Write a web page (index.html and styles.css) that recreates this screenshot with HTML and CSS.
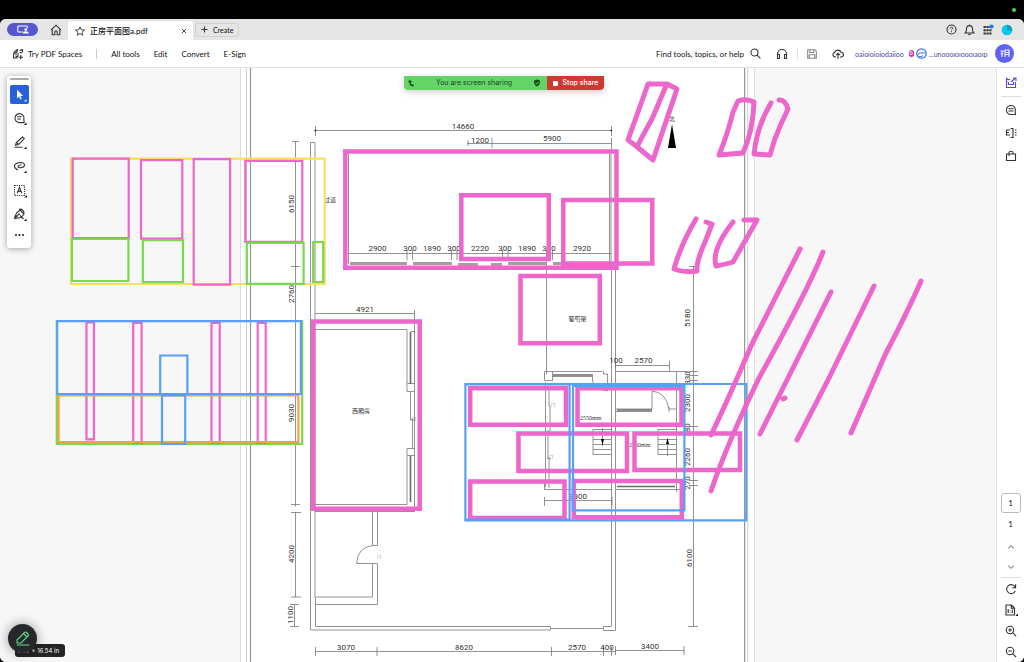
FILE: index.html
```html
<!DOCTYPE html>
<html lang="en">
<head>
<meta charset="utf-8">
<title>正房平面图a.pdf</title>
<link rel="stylesheet" href="styles.css">
</head>
<body>
<div class="menubar"><span class="camera-dot"></span></div>
<div class="window">
  <header class="tabs">
    <button class="share-pill" aria-label="Screen share"><svg width="12" height="9" viewBox="0 0 12 9"><path d="M6 7H.8V1h9.400V3.500" class="w"/><circle cx="8.800" cy="4.600" r="1.400" fill="#fff"/><path d="M6 8.600q0-2.400 2.800-2.400t2.800 2.400z" fill="#fff"/></svg></button>
    <button class="home" aria-label="Home"><svg width="12" height="12" viewBox="0 0 12 12"><path d="M1 6.200 6 1.200l5 5M2.200 5.500v5.300h2.600V8q0-1.200 1.200-1.200T7.200 8v2.800h2.600V5.500" class="i"/></svg></button>
    <div class="tab">
      <svg width="10" height="10" viewBox="0 0 10 10"><path d="m5 .8 1.200 2.900 3.200.3L7 6.100l.7 3.100L5 7.500 2.300 9.200 3 6.100.6 4l3.200-.3z" class="i thin"/></svg>
      <span class="tab-name">正房平面图a.pdf</span>
      <button class="close" aria-label="Close tab"><svg width="6" height="6" viewBox="0 0 6 6"><path d="m.8.8 4.400 4.400M5.200.8.8 5.200" class="i thin"/></svg></button>
    </div>
    <button class="create"><svg width="7" height="7" viewBox="0 0 7 7"><path d="M3.500.5v6M.5 3.500h6" class="i"/></svg>Create</button>
    <div class="tab-actions">
      <button aria-label="Help"><svg width="11" height="11" viewBox="0 0 11 11"><circle cx="5.500" cy="5.500" r="4.500" class="i"/><path d="M4.200 4.500q0-1.300 1.300-1.300t1.300 1.200q0 .6-.7 1.100t-.6.9M5.500 7.200v1" class="i thin"/></svg></button>
      <button aria-label="Notifications"><svg width="11" height="12" viewBox="0 0 11 12"><path d="M1.300 9h8.400Q8.500 8 8.500 4.900 8.500 1.600 5.500 1.600t-3 3.300Q2.500 8 1.300 9zM4.300 10q1.200 1.400 2.400 0M5.500.6v1" class="i"/></svg></button>
      <button aria-label="Apps"><svg width="12" height="12" viewBox="0 0 12 12"><path d="M1.500 3h8M1.500 6.200h8M1.500 9.400h8" stroke="#333" stroke-width="2" stroke-dasharray="2.300 .6"/><circle cx="9.500" cy="2.500" r="2.100" fill="#147af3"/></svg></button>
      <button aria-label="Profile"><svg width="12" height="12" viewBox="0 0 12 12"><circle cx="6" cy="6" r="5.300" fill="#08c8ee"/><path d="M6 .8v5.400l5.200.6A5.300 5.300 0 0 0 6 .8" fill="#0a9fb8"/></svg></button>
    </div>
  </header>
  <nav class="toolbar">
    <button class="spaces"><svg width="12" height="12" viewBox="0 0 12 12"><path d="M6 1.200Q1.500 3 1.500 7.500V10h4M3.500 2.700l2.500.2M2.300 5.200l3.200-1.300M4 5.500v2M6 5v3.500M3.500 8.600H6M7.500 2.500l3.200-1M10.500 1v3.500M8.800 7v4.400M6.600 9.200H11M7.500 4.500l2.500.4" class="i"/></svg>Try PDF Spaces</button>
    <span class="vline"></span>
    <a href="#tools">All tools</a><a href="#edit">Edit</a><a href="#convert">Convert</a><a href="#sign">E-Sign</a>
    <div class="toolbar-right">
      <button class="find">Find tools, topics, or help<svg width="11" height="11" viewBox="0 0 11 11"><circle cx="4.500" cy="4.500" r="3.500" class="i"/><path d="m7.100 7.100 3.300 3.300" class="i"/></svg></button>
      <button aria-label="Support"><svg width="12" height="12" viewBox="0 0 12 12"><path d="M1.500 9V6a4.500 4.500 0 0 1 9 0v3M1.500 6.500h2v4h-2zM8.500 6.500h2v4h-2z" class="i"/></svg></button>
      <span class="vline short"></span>
      <button aria-label="Save"><svg width="10" height="10" viewBox="0 0 10 10"><path d="M.7.700h7.200l1.400 1.400v7.200H.7zM2.800.8v2.700h4V.8M2.300 9.200V5.800h5.400v3.400" class="i faded"/></svg></button>
      <button class="upload" aria-label="Upload"><svg width="12" height="12" viewBox="0 0 12 12"><path d="M4 9H3a2.300 2.300 0 0 1-.4-4.500A3.400 3.400 0 0 1 9 4.200 2.400 2.400 0 0 1 9 9H8M6 11V5.300M4 7.200l2-2 2 2" class="i"/></svg></button>
      <span class="people"><span>oaioioioiodaiioo</span><b>0</b><svg width="11" height="11" viewBox="0 0 11 11"><circle cx="5.500" cy="5.500" r="4.700" fill="#fff" stroke="#3b6df0" stroke-width="1.200"/><path d="M1.500 7.500q1-3 3.500-2.500h4.500M3 8.500q2 1 4-1" fill="none" stroke="#3b6df0"/></svg><span>...unoooıoıoooıaoıp</span></span>
      <button class="avatar" aria-label="Account"><svg width="10" height="9" viewBox="0 0 10 9"><path d="M.5 2h4M2 2v6M5 1h4.500M5.500 3.500h4M5 1v7M9 1v7M5 5.500h4M.8 5h2.500" class="w"/></svg></button>
    </div>
  </nav>
  <main class="workspace">
    <div class="canvas">
      <svg class="plan" viewBox="0 68 996 594" preserveAspectRatio="xMinYMin slice" aria-label="Floor plan">
        <rect x="240.500" y="60" width="514" height="610" fill="#fff" stroke="#dedede"/>
        <path d="M246.500 68v594M747.700 68v594" stroke="#cfcfcf"/>
        <path d="M250.500 68v594M744.600 68v594" stroke="#969696" stroke-width="1.200"/>
        <g class="cad">
          <path d="M315.500 130.500h296M315.500 126v10M611.500 126v10M467 143.500h144M468 140v6M492 138v10M611.500 138v11"/>
          <path d="M295.500 141.500v365M292 141.500h7M291 266.500h9M291 504.500h9M295.500 512v85M291 512.500h10M291 597h10M294.500 604v22.500M290 604.500h9M290 626.500h9"/>
          <path d="M693.500 266v224M689 266.500h9M689 371.500h9M689 375.500h9M689 380.500h9M689 426.500h9M689 480.500h9M689 485.500h9M693.500 489v137.500M688 626.500h10"/>
          <path d="M310.500 630V142.500h4.500V598M310.500 630h240v-3.500H315.500V598M551 628.500h52M603.500 626.500h8v-107M603.500 626.500v4h12V268M611.500 268V519M611 154v108M609.500 154v108"/>
          <path d="M348.500 154v110M348.500 253.500h263M407 250v10M412.500 250v10M451.500 250v10M457 250v10M502.500 250v10M508 250v10M546.500 250v124M552.500 250v10"/>
          <path d="M315 313.500h99.500M414.500 310v201M315 329.500h92v62h7.500M315 504.500h92v-56h7.500M411 331.500h3.500M407.500 383.500h7M407.500 455.500h7M315 511.500h100"/>
          <path d="M410.500 392v28h2v28M411 419l4 1M372.500 512v33M377.500 512v33.500h-5q-15 2-16 18h21M372.500 564v33H315.500M377.500 564v40.500h-62"/>
          <path d="M544.500 371.500h8v9h-8zM552 376.500h40M552 371.500h50M592.500 374v7q1 8 15 10v-17h-4v-3M545.500 382v105M549 390v16h1v30M548 430v28h1v30M547 458l4 1M544.500 480v9.500h67"/>
          <path d="M615.500 371.500h72M615 365.500h55M615.500 362v7M669.500 361v10M676.500 372v120M616 409h36v-18q14 1 17 18h7M616 411.500h36M669 407v5M616 489.500h66"/>
          <path d="M544.500 500.500h67M544.500 497v9M612 497v9M593 429.500h18.500M593 434.500h18M593 439.500h18M593 444.500h18M593 449.500h18M593 454.500h18M593 429v26M602.500 428v18M658 429.500h18.500M658 434.500h18M658 439.500h18M658 444.500h18M658 449.500h18M658 454.500h18M658 429v26M667.500 439v17"/>
          <path d="M315.500 651.500h300M315.500 647v9M377 647v9M551.500 647v9M603.500 647v9M611.500 647v9M615.500 650.500h69M615.500 646v9M684 646v9"/>
        </g>
        <path d="M350 263.500h57M413 263.500h39M458 264.500h20M491 264.500h11M508 263.500h39M553 263.500h8" stroke="#a0a0a0" stroke-width="3"/>
        <path d="M553 375h39M410.500 332v52M410.500 456v46M617 486.500h58M617 410h35" stroke="#686868" stroke-width="1.600"/>
        <path d="m601 439 1.500 6 1.500-6zM666 444l1.500-6 1.500 6zM668 148l4-24 4 24zM314 130.500l2-1v2zM610 130.500l2-1v2z" fill="#000"/>
        <g class="dim">
          <text x="463" y="129">14660</text><text x="480" y="143">1200</text><text x="552" y="141">5900</text>
          <text x="377.500" y="251">2900</text><text x="410" y="251">300</text><text x="432" y="251">1890</text><text x="454" y="251">300</text><text x="480" y="251">2220</text><text x="505" y="251">300</text><text x="527" y="251">1890</text><text x="549" y="251">300</text><text x="582" y="251">2920</text>
          <text x="365" y="312">4921</text><text x="616" y="363">100</text><text x="643.500" y="363">2570</text><text x="578" y="499">3300</text>
          <text x="346" y="650">3070</text><text x="464" y="650">8620</text><text x="577" y="650">2570</text><text x="607" y="650">400</text><text x="650" y="649">3400</text>
          <text transform="translate(294 204) rotate(-90)">6150</text><text transform="translate(294 294) rotate(-90)">2760</text><text transform="translate(294 413) rotate(-90)">9030</text><text transform="translate(294 554) rotate(-90)">4200</text><text transform="translate(293 615) rotate(-90)">1100</text>
          <text transform="translate(690 318) rotate(-90)">5180</text><text transform="translate(690 378) rotate(-90)">330</text><text transform="translate(690 403) rotate(-90)">2300</text><text transform="translate(690 430) rotate(-90)">380</text><text transform="translate(690 457) rotate(-90)">2260</text><text transform="translate(690 483) rotate(-90)">270</text><text transform="translate(692 558) rotate(-90)">6100</text>
        </g>
        <g class="room"><text x="330" y="202">过道</text><text x="361" y="413">西厢房</text><text x="577.500" y="321">葡萄架</text><text x="672" y="121">北</text><text x="589" y="420">+2550mm</text><text x="638" y="447">+2550mm</text></g>
        <g class="room door"><text x="553" y="407">门</text><text x="551" y="459">门</text><text x="379" y="559">门</text><text x="414" y="421">门</text></g>
        <g class="mark yellow"><path d="M71 158.700h253.700V284H71z"/></g>
        <g class="mark pink"><path d="M72.700 158.700h56v79.500h-56zM141 160.200h41.300v78.500H141zM193.700 159.200h36.400v125.500h-36.400zM245.300 160.800h57v81h-57z"/></g>
        <g class="mark green"><path d="M72 239h56.400v42H72zM142.800 240.200H183v42h-40.200zM246.800 242.800h56.800v41h-56.800zM313.200 242h10v40h-10zM56.800 321h245.400v123H56.800z"/></g>
        <g class="mark pink"><path d="M86.500 322.500H94v116.800h-7.500zM133.200 323h8.400v120h-8.400zM211.500 323h8.200v120h-8.200zM257.700 323h8v120h-8z"/></g>
        <g class="mark orange"><path d="M58.500 395.500h239.900v46.500H58.500z"/></g>
        <g class="mark blue"><path d="M57.200 321.200h243.700v72.800H57.200zM160.200 355.500h27.200V394h-27.200zM162 395.500h23.200V444H162z"/></g>
        <g class="mark pink wide"><path d="M345.300 151.500h271.200v116.300H345.300zM461.300 195.300h87.500v63.800h-87.500zM563.300 200h89v63.500h-89zM520.500 276h79.300v67.200h-79.300zM313.200 321.500h106.500v187.300H313.200z"/><path d="M470.200 388.300H566v36.500h-95.800zM577.500 388.300h104v36.500h-104zM518.500 433.500H627V471H518.500zM634.500 433.500H740V470H634.500zM470.200 481.600h94.300v36.300h-94.300zM573.800 481h108v36.300h-108z"/></g>
        <g class="mark blue"><path d="M465.400 384h280.900v136.400H465.400zM465.400 384.500h104.200v135H465.400zM573 386h111.400v124.300H573z"/></g>
        <g class="mark pink free">
          <path d="m648 84-20 56 8 6 17 14 24-71-10-5zM666 86l-14 33q-8 14-14 26"/>
          <path d="M738 101q8-3 16 1-1 29-11 51l-24 2q9-22 14-43zM771 103q-14 23-17 51l16 1q4-16 11-31l7-15q-3-10-9-9"/>
          <path d="M696 219q-15 25-22 50 11 4 23 2-1-9 8-29l7-18-6-2M733 222q-22 28-17 44 11-2 17-4l24-42h-13"/>
          <path d="m800 249-49 97q-23 54-40 89M823 252q-15 38-64 126-32 66-48 113M831 292l-71 142M874 286l-45 92-32 62M921 281q-12 28-36 74l-34 78M783 399l2-1"/>
        </g>
      </svg>
      <aside class="palette" aria-label="Drawing tools">
        <span class="grip"></span>
        <button class="active" aria-label="Select"><svg width="19" height="19" viewBox="0 0 19 19"><path d="M7 4.500v9l2.100-1.900 1.300 2.900 1.300-.6-1.300-2.900h2.700z" fill="#fff"/><path d="M16.500 14v2.500H14z" fill="#fff"/></svg></button>
        <button aria-label="Comment"><svg width="19" height="19" viewBox="0 0 19 19"><path d="M14.200 13.600H9.500a4.500 4.500 0 1 1 4.300-3.200zM7.200 7.700h4.500M7.200 10h3.600" class="i"/><path d="M16.500 13.500V16H14z"/></svg></button>
        <button aria-label="Highlight"><svg width="19" height="19" viewBox="0 0 19 19"><path d="m5.500 12.300.8-2.700L12.500 4l1.800 1.600-5.800 6zM6.800 9.600l1.800 1.700M4.500 14.200h8" class="i"/><path d="M16.500 13.500V16H14z"/></svg></button>
        <button aria-label="Draw"><svg width="19" height="19" viewBox="0 0 19 19"><path d="M8 13Q4 11 4.500 8.500 6 5.500 10.500 5.500q4 .2 4 2.600-.3 2.400-4 2.600-2.500 0-2.500-1.200T11.500 8" class="i"/><path d="M16.500 13.500V16H14z"/></svg></button>
        <button aria-label="Select text"><svg width="19" height="19" viewBox="0 0 19 19"><path d="M4.500 4.500h10v10h-10z" class="i" stroke-dasharray="1.200 1"/><path d="m7.200 12.300 2.300-6 2.300 6M8 10.400h3" class="i"/><path d="M17 14v2.500h-2.500z"/></svg></button>
        <button aria-label="Sign"><svg width="19" height="19" viewBox="0 0 19 19"><path d="m4.500 13.500 2-5.500L10 5l4 4-3 3.500zM9 4.500q2-1 3.500.5t1.700 3M5 13.200l4-4M4.500 11H8M10 10.500l3.500 3.500M8.500 8.500l1.500 1" class="i"/><path d="M16.500 13.500V16H14z"/></svg></button>
        <button class="more" aria-label="More"><svg width="19" height="12" viewBox="0 0 19 12"><circle cx="6" cy="6" r=".9"/><circle cx="9.500" cy="6" r=".9"/><circle cx="13" cy="6" r=".9"/></svg></button>
      </aside>
      <div class="sharing"><span class="status"><svg width="8" height="8" viewBox="0 0 8 8"><path d="M1 2.800 3.300.3l.3 2 2 .2-1.700 1 .3 1.700 2.800.6L6.500 7.500Q2.500 7.500 2.400 3.500z" fill="#174f1a"/></svg><span>You are screen sharing</span><svg width="8" height="8" viewBox="0 0 8 8"><path d="m4 .4 3 1.200v2.200Q6.500 6.400 4 7.500 1.500 6.400 1 3.800V1.600z" fill="#174f1a"/><path d="m2.500 3.800 1.200 1.100 2-2" fill="none" stroke="#64d468"/></svg></span><button><i></i>Stop share</button></div>
      <div class="size-label">8.27 x 16.54 in</div>
      <button class="annotate" aria-label="Annotate"><svg width="14" height="15" viewBox="0 0 14 15"><path d="M1 12V9l7.500-7.500q1-1 2 0l1.500 1.500q1 1 0 2L5 12zM7.500 2.500 11 6M.8 14h12.600" fill="none" stroke="#60dc88" stroke-width="1.100"/></svg></button>
    </div>
    <aside class="rail">
      <button aria-label="Assistant"><svg width="12" height="12" viewBox="0 0 12 12"><path d="M5 2.500H1.500v8h9V5M1 1l2.500 2M3.500 5v2.500h5V5M6 5l4-3.500M8 1h3v3M1.500 5h1" class="i violet"/></svg></button>
      <hr>
      <button aria-label="Comments"><svg width="12" height="12" viewBox="0 0 12 12"><path d="M10.500 10.500H6a4.500 4.500 0 1 1 4.200-3.200zM3.500 4.700h5M3.500 7h5" class="i"/></svg></button>
      <button aria-label="Bookmarks"><svg width="12" height="12" viewBox="0 0 12 12"><path d="M5 3H1.500v5H5M1.500 5.500H4M5.500 1.500H8v9H5.500M10 3h1.500M10 5.500h1.500M10 8h1.500" class="i"/></svg></button>
      <button aria-label="Attachments"><svg width="12" height="12" viewBox="0 0 12 12"><path d="M1.500 4h9v6.500h-9zM4 6V2.500q0-1.300 2-1.300t2 1.300V4" class="i"/></svg></button>
      <div class="page-controls">
        <input type="text" value="1" aria-label="Current page"><span class="count">1</span>
        <button aria-label="Previous page"><svg width="8" height="8" viewBox="0 0 8 8"><path d="m1.300 5.300 2.700-2.600 2.700 2.600" class="i faded"/></svg></button>
        <button aria-label="Next page"><svg width="8" height="8" viewBox="0 0 8 8"><path d="m1.300 2.700 2.700 2.600 2.700-2.600" class="i faded"/></svg></button>
        <hr>
        <button class="tall" aria-label="Rotate"><svg width="12" height="12" viewBox="0 0 12 12"><path d="M10.300 4.300A4.500 4.500 0 1 0 10.300 8M10.600 1.200v3.500H7.200" class="i"/></svg></button>
        <button class="tall" aria-label="Page display"><svg width="14" height="12" viewBox="0 0 14 12"><path d="M2 1h5.500L10.500 4v7H2zM7.300 1v3.200h3M4.200 5v4M6.200 6v.5M6.200 8v.5M8.300 5.500v3.500" class="i"/><path d="M14 9.500V12h-2.500z"/></svg></button>
        <button class="tall" aria-label="Zoom in"><svg width="12" height="12" viewBox="0 0 12 12"><circle cx="5" cy="5" r="3.700" class="i"/><path d="m7.800 7.800 3.300 3.300M5 3.200v3.600M3.200 5h3.600" class="i"/></svg></button>
        <button class="tall" aria-label="Zoom out"><svg width="12" height="12" viewBox="0 0 12 12"><circle cx="5" cy="5" r="3.700" class="i"/><path d="m7.800 7.800 3.300 3.300M3.200 5h3.600" class="i"/></svg></button>
      </div>
    </aside>
  </main>
</div>
</body>
</html>
```
FILE: styles.css
```css
* { box-sizing: border-box; }
body { margin: 0; height: 100vh; display: flex; flex-direction: column; overflow: hidden; background: #000; color: #111; font: 8px/10px Lato, "Noto Sans CJK SC", sans-serif; }
button, input { margin: 0; padding: 0; border: 0; background: none; color: inherit; font: inherit; }
button { display: flex; align-items: center; justify-content: center; }
a { color: inherit; text-decoration: none; }
svg { display: block; flex: none; }
.i { fill: none; stroke: #333; stroke-width: 1.1; }
.thin { stroke-width: 0.9; }
.w { fill: none; stroke: #fff; }
.faded { stroke: #888; }
.violet { stroke: #5547d8; }

.menubar { height: 19px; flex: none; display: flex; justify-content: flex-end; padding: 8px 8px 0 0; }
.camera-dot { width: 4px; height: 4px; border-radius: 50%; background: #50d050; }
.window { flex: 1; min-height: 0; display: flex; flex-direction: column; border-radius: 6px; overflow: hidden; background: #fff; }

.tabs { height: 21px; flex: none; display: flex; align-items: center; background: #e5e5e5; padding-left: 7px; }
.share-pill { width: 31px; height: 13px; border-radius: 7px; background: #5856cf; }
.home { width: 27px; margin-left: 4px; padding-left: 1px; }
.tab { width: 125px; height: 19px; align-self: flex-end; display: flex; align-items: center; gap: 5px; padding: 0 6px 0 7px; margin-left: -1px; background: #fff; border-radius: 3px 3px 0 0; }
.tab-name { flex: 1; white-space: nowrap; color: #111; font-weight: 500; }
.create { height: 14px; margin-left: 2px; padding: 0 5px; gap: 5px; border: 1px solid #d2d2d2; border-radius: 3px; font-size: 7px; }
.tab-actions { margin-left: auto; display: flex; align-items: center; gap: 7px; padding-right: 11px; }

.toolbar { height: 28px; flex: none; display: flex; align-items: center; gap: 14px; padding: 0 10px 0 12px; border-bottom: 1px solid #e2e2e2; }
.spaces { gap: 4px; }
.vline { width: 1px; height: 10px; background: #ccc; }
.short { background: #ddd; margin: 0 -6px; }
.toolbar-right { margin-left: auto; display: flex; align-items: center; gap: 15px; }
.find { gap: 6px; }
.upload { margin-right: -4px; }
.people { display: flex; align-items: center; gap: 2px; color: #4c4a9e; font-size: 7px; width: 140px; white-space: nowrap; margin-right: -15px; }
.people b { width: 5px; height: 7px; border-radius: 3px; background: #c735a9; color: #fff; line-height: 7px; text-align: center; font-size: 5px; margin-left: 3px; }
.avatar { width: 19px; height: 19px; border-radius: 50%; background: #6062f1; }

.workspace { flex: 1; min-height: 0; display: flex; }
.canvas { flex: 1; min-width: 0; position: relative; background: #f7f7f7; overflow: hidden; }
.plan { width: 100%; height: 100%; }
.cad { fill: none; stroke: #777; stroke-width: 0.8; }
.dim { fill: #333; font-family: Roboto, sans-serif; font-size: 8px; text-anchor: middle; }
.room { fill: #333; font-family: "Liberation Serif", "Noto Sans CJK SC", serif; font-size: 6px; text-anchor: middle; }
.door { fill: #777; font-size: 4px; }
.mark { fill: none; stroke-width: 2.2; }
.pink { stroke: #ed66cc; }
.yellow { stroke: #f8df60; }
.green { stroke: #79d94d; }
.orange { stroke: #f5a13d; }
.blue { stroke: #589ff8; }
.wide { stroke-width: 4.5; }
.free { stroke-width: 5; stroke-linecap: round; stroke-linejoin: round; }

.palette { position: absolute; left: 7px; top: 8px; width: 24px; padding: 2px 2px 7px; display: flex; flex-direction: column; align-items: center; gap: 5px; background: #fff; border-radius: 3px; box-shadow: 0 1px 6px #0005; }
.grip { width: 19px; height: 2px; border-radius: 1px; background: #aaa; }
.active { background: #2860d8; border-radius: 2px; }
.sharing { position: absolute; left: 404px; top: 8px; height: 14px; width: 200px; display: flex; border-radius: 0 0 4px 4px; overflow: hidden; font: 7px/14px Inter, sans-serif; box-shadow: 0 2px 7px #0003; }
.status { width: 143px; display: flex; align-items: center; justify-content: space-between; padding: 0 6px 0 3px; background: #64d468; color: #1c451f; }
.sharing button { flex: 1; gap: 5px; background: #cc3a33; color: #fff; font-weight: 500; }
.sharing i { width: 5px; height: 5px; border-radius: 1px; background: #fff; }
.size-label { position: absolute; left: 15px; bottom: 5px; width: 50px; height: 13px; padding-right: 6px; border-radius: 3px; background: #252525; color: #fff; font: 6px/13px Inter, sans-serif; text-align: right; white-space: nowrap; }
.annotate { position: absolute; left: 8px; bottom: 9px; width: 29px; height: 29px; border-radius: 50%; background: #26282c; box-shadow: 0 0 12px #0006; }

.rail { width: 28px; flex: none; display: flex; flex-direction: column; align-items: center; gap: 11px; padding: 9px 0 4px; border-left: 1px solid #e2e2e2; background: #fff; }
.rail hr { width: 20px; margin: -4px 0; border: 0; border-top: 1px solid #ddd; }
.page-controls { margin-top: auto; display: flex; flex-direction: column; align-items: center; gap: 9px; }
.page-controls input { width: 20px; height: 20px; border: 1px solid #bbb; border-radius: 3px; text-align: center; }
.count { height: 10px; margin: -3px 0 3px; }
.page-controls button { height: 11px; }
.page-controls .tall { height: 12px; }
.page-controls hr { margin: -4px 0; }
```
